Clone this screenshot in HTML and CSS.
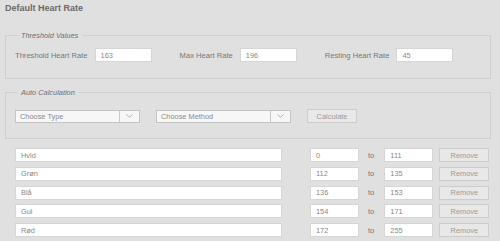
FILE: index.html
```
<!DOCTYPE html>
<html>
<head>
    <meta charset="utf-8">
    <title>Default Heart Rate</title>
    <link rel="stylesheet" href="styles.css">
</head>
<body>
<div class="page">
    <h1 class="title">Default Heart Rate</h1>

    <fieldset class="box">
        <legend>Threshold Values</legend>
        <div class="line">
            <div class="field">
                <label for="threshold">Threshold Heart Rate</label>
                <input type="text" id="threshold" value="163">
            </div>
            <div class="field">
                <label for="maxRate">Max Heart Rate</label>
                <input type="text" id="maxRate" value="196">
            </div>
            <div class="field">
                <label for="restRate">Resting Heart Rate</label>
                <input type="text" id="restRate" value="45">
            </div>
        </div>
    </fieldset>

    <fieldset class="box box-auto">
        <legend>Auto Calculation</legend>
        <div class="line line-auto">
            <div class="select select-type">
                <span>Choose Type</span>
                <span class="arrow"><svg width="7" height="4" viewBox="0 0 7 4"><path d="M0.5 0.5 L3.5 3.3 L6.5 0.5" fill="none" stroke="#aaa" stroke-width="0.9"/></svg></span>
            </div>
            <div class="select select-method">
                <span>Choose Method</span>
                <span class="arrow"><svg width="7" height="4" viewBox="0 0 7 4"><path d="M0.5 0.5 L3.5 3.3 L6.5 0.5" fill="none" stroke="#aaa" stroke-width="0.9"/></svg></span>
            </div>
            <button class="btn btn-calc">Calculate</button>
        </div>
    </fieldset>

    <div class="zones">
        <div class="zone">
            <input type="text" class="zone-name" value="Hvid">
            <input type="text" class="zone-num" value="0">
            <span class="to">to</span>
            <input type="text" class="zone-num" value="111">
            <button class="btn btn-remove">Remove</button>
        </div>
        <div class="zone">
            <input type="text" class="zone-name" value="Grøn">
            <input type="text" class="zone-num" value="112">
            <span class="to">to</span>
            <input type="text" class="zone-num" value="135">
            <button class="btn btn-remove">Remove</button>
        </div>
        <div class="zone">
            <input type="text" class="zone-name" value="Blå">
            <input type="text" class="zone-num" value="136">
            <span class="to">to</span>
            <input type="text" class="zone-num" value="153">
            <button class="btn btn-remove">Remove</button>
        </div>
        <div class="zone">
            <input type="text" class="zone-name" value="Gul">
            <input type="text" class="zone-num" value="154">
            <span class="to">to</span>
            <input type="text" class="zone-num" value="171">
            <button class="btn btn-remove">Remove</button>
        </div>
        <div class="zone">
            <input type="text" class="zone-name" value="Rød">
            <input type="text" class="zone-num" value="172">
            <span class="to">to</span>
            <input type="text" class="zone-num" value="255">
            <button class="btn btn-remove">Remove</button>
        </div>
    </div>
</div>
</body>
</html>
```

FILE: styles.css
```
/* base */
body {
    font-family: "Liberation Sans", Arial, sans-serif;
    background-color: #e1e0e1;
    color: #777;
    margin: 0;
    padding: 0;
}

.page {
    padding: 3px 9px 0 5px;
}

.title {
    font-size: 9px;
    line-height: 11px;
    font-weight: bold;
    color: #6a6a6a;
    margin: 0 0 17px 0;
}

/* fieldsets */
.box {
    margin: 0;
    border: 1px solid #d0cfd0;
    padding: 8px 9px 16px 9px;
    min-width: 0;
}

.box legend {
    font-size: 7.4px;
    font-style: italic;
    color: #6f6f6f;
    padding: 0 4px;
    margin-left: 2px;
    line-height: 9px;
}

.box-auto {
    margin-top: 9px;
    padding-top: 12px;
    padding-bottom: 15px;
}

.line {
    display: flex;
    align-items: center;
    gap: 28px;
}

.field {
    display: flex;
    align-items: center;
    gap: 7px;
}

.field label {
    font-size: 7.6px;
    color: #777;
}

input[type="text"] {
    font-family: "Liberation Sans", Arial, sans-serif;
    font-size: 7.4px;
    color: #888;
    background-color: #fff;
    border: 1px solid #d6d6d6;
    height: 14px;
    box-sizing: border-box;
    padding: 0 0 0 5px;
    margin: 0;
    outline: none;
}

.field input[type="text"] {
    width: 57px;
}

/* auto calculation */
.line-auto {
    gap: 16px;
}

.select {
    display: flex;
    align-items: center;
    justify-content: space-between;
    height: 13px;
    box-sizing: border-box;
    border: 1px solid #c4c4c4;
    background-color: #f7f7f7;
    font-size: 7.4px;
    color: #8a8a8a;
    padding-left: 4px;
}

.select-type {
    width: 125px;
}

.select-method {
    width: 135px;
}

.select .arrow {
    width: 19px;
    height: 100%;
    border-left: 1px solid #c8c8c8;
    display: flex;
    align-items: center;
    justify-content: center;
}

.btn {
    font-family: "Liberation Sans", Arial, sans-serif;
    font-size: 7.4px;
    color: #9a9a9a;
    background-color: #e9e8e9;
    border: 1px solid #cdcdcd;
    box-sizing: border-box;
    padding: 0;
    margin: 0;
    cursor: pointer;
}

.btn-calc {
    width: 50px;
    height: 14px;
}

/* zones */
.zones {
    display: flex;
    flex-direction: column;
    gap: 4.75px;
    padding: 9px 0 0 10px;
}

.zone {
    display: flex;
    align-items: center;
    height: 14px;
}

.zone-name {
    width: 267px;
}

.zone input.zone-num {
    width: 49px;
}

.zone-name + .zone-num {
    margin-left: 28px;
}

.to {
    font-size: 7.6px;
    color: #777;
    margin: 0 10px 0 9px;
}

.btn-remove {
    width: 50px;
    height: 14px;
    margin-left: 6px;
}
```
